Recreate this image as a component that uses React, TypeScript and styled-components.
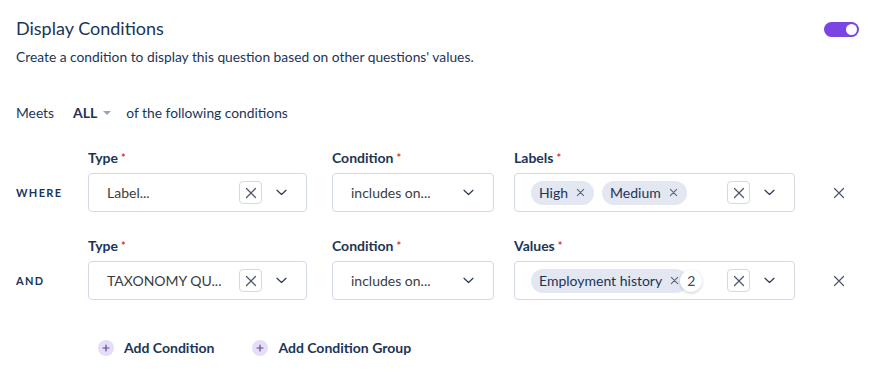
import styled, { createGlobalStyle } from "styled-components";

const GlobalStyle = createGlobalStyle`
  body {
    margin: 0;
    background: #ffffff;
    font-family: Lato, "Open Sans", sans-serif;
  }
`;

const Page = styled.div`
  padding: 16px 16px 0 16px;
  color: #1c3557;
`;

const HeaderRow = styled.div`
  display: flex;
  justify-content: space-between;
  align-items: flex-start;
`;

const Title = styled.h2`
  margin: 0;
  font-size: 18px;
  line-height: 24px;
  font-weight: 400;
  color: #1c3557;
`;

const Toggle = styled.div`
  width: 35px;
  height: 15px;
  border-radius: 8px;
  background: #7b45e3;
  margin: 6px 8px 0 0;
  display: flex;
  align-items: center;
  justify-content: flex-end;
  padding: 0 2px;
  box-sizing: border-box;
`;

const Knob = styled.span`
  width: 11px;
  height: 11px;
  border-radius: 50%;
  background: #ffffff;
`;

const Subtitle = styled.p`
  margin: 8px 0 0 0;
  font-size: 13.8px;
  line-height: 18px;
  color: #1c3557;
`;

const MeetsRow = styled.div`
  display: flex;
  align-items: center;
  margin-top: 38px;
  font-size: 13.8px;
  line-height: 18px;
`;

const AllSelect = styled.span`
  display: flex;
  align-items: center;
  margin: 0 15px 0 19px;
  font-weight: 700;
  font-size: 14px;
`;

const Caret = styled.span`
  width: 0;
  height: 0;
  margin-left: 6px;
  border-left: 4px solid transparent;
  border-right: 4px solid transparent;
  border-top: 4px solid #9aa3b2;
`;

const Rows = styled.div`
  margin-top: 27px;
  display: flex;
  flex-direction: column;
  gap: 25px;
`;

const Row = styled.div`
  display: flex;
  align-items: flex-end;
`;

const Joiner = styled.div`
  width: 72px;
  flex-shrink: 0;
  height: 39px;
  display: flex;
  align-items: center;
  font-size: 11px;
  font-weight: 700;
  letter-spacing: 1.3px;
  color: #1c3557;
`;

const Field = styled.div<{ $width: number; $gap?: number }>`
  width: ${(p) => p.$width}px;
  flex-shrink: 0;
  margin-left: ${(p) => p.$gap ?? 0}px;
  display: flex;
  flex-direction: column;
  gap: 7px;
`;

const Label = styled.div`
  font-size: 14px;
  line-height: 17px;
  font-weight: 700;
  color: #1c3557;
`;

const Star = styled.span`
  color: #e0323c;
  font-size: 11px;
  margin-left: 3px;
  vertical-align: top;
`;

const Box = styled.div`
  height: 39px;
  box-sizing: border-box;
  border: 1px solid #d3dae6;
  border-radius: 4px;
  display: flex;
  align-items: center;
  padding: 0 19px 0 18px;
  font-size: 14px;
  color: #3a3d42;
`;

const ChipBox = styled(Box)`
  padding-left: 16px;
`;

const Value = styled.span`
  flex: 1;
  white-space: nowrap;
`;

const Chips = styled.div`
  flex: 1;
  display: flex;
  align-items: center;
  gap: 8px;
`;

const Chip = styled.span`
  height: 24px;
  border-radius: 12px;
  background: #e3e7f1;
  display: flex;
  align-items: center;
  gap: 8px;
  padding: 0 9px 0 8px;
  font-size: 14px;
  color: #1c3557;
  white-space: nowrap;
`;

const CountBadge = styled.span`
  width: 22px;
  height: 22px;
  border-radius: 50%;
  background: #ffffff;
  box-shadow: 0 1px 3px rgba(30, 50, 80, 0.25);
  display: flex;
  align-items: center;
  justify-content: center;
  font-size: 14px;
  color: #3d4a5c;
  margin-left: -16px;
`;

const ClearButton = styled.span`
  width: 23px;
  height: 23px;
  box-sizing: border-box;
  border: 1px solid #d3dae6;
  border-radius: 4px;
  display: flex;
  align-items: center;
  justify-content: center;
  margin-right: 14px;
`;

const RemoveCell = styled.div`
  height: 39px;
  flex-shrink: 0;
  margin-left: 38px;
  display: flex;
  align-items: center;
`;

const Actions = styled.div`
  display: flex;
  gap: 38px;
  margin: 39px 0 0 82px;
`;

const ActionButton = styled.div`
  display: flex;
  align-items: center;
  gap: 10px;
  font-size: 14px;
  font-weight: 700;
  color: #1c3557;
`;

const PlusCircle = styled.span`
  width: 16px;
  height: 16px;
  border-radius: 50%;
  background: #e7ddfa;
  display: flex;
  align-items: center;
  justify-content: center;
`;

function Cross({ size = 12, color = "#4a5568" }: { size?: number; color?: string }) {
  return (
    <svg width={size} height={size} viewBox="0 0 12 12" fill="none">
      <path d="M1.5 1.5L10.5 10.5M10.5 1.5L1.5 10.5" stroke={color} strokeWidth="1.2" strokeLinecap="round" />
    </svg>
  );
}

function SmallCross() {
  return (
    <svg width="9" height="9" viewBox="0 0 10 10" fill="none">
      <path d="M1.5 1.5L8.5 8.5M8.5 1.5L1.5 8.5" stroke="#5a667a" strokeWidth="1.2" strokeLinecap="round" />
    </svg>
  );
}

function Chevron() {
  return (
    <svg width="11" height="7" viewBox="0 0 11 7" fill="none">
      <path d="M1 1.2L5.5 5.5L10 1.2" stroke="#2d3d55" strokeWidth="1.2" strokeLinecap="round" strokeLinejoin="round" />
    </svg>
  );
}

function Plus() {
  return (
    <svg width="8" height="8" viewBox="0 0 8 8" fill="none">
      <path d="M4 1V7M1 4H7" stroke="#5b4b8a" strokeWidth="1.2" strokeLinecap="round" />
    </svg>
  );
}

function Controls() {
  return (
    <>
      <ClearButton>
        <Cross />
      </ClearButton>
      <Chevron />
    </>
  );
}

function Required({ children }: { children: string }) {
  return (
    <Label>
      {children}
      <Star>*</Star>
    </Label>
  );
}

export default function App() {
  return (
    <>
      <GlobalStyle />
      <Page>
        <HeaderRow>
          <Title>Display Conditions</Title>
          <Toggle>
            <Knob />
          </Toggle>
        </HeaderRow>
        <Subtitle>Create a condition to display this question based on other questions' values.</Subtitle>

        <MeetsRow>
          Meets
          <AllSelect>
            ALL
            <Caret />
          </AllSelect>
          of the following conditions
        </MeetsRow>

        <Rows>
          <Row>
            <Joiner>WHERE</Joiner>
            <Field $width={219}>
              <Required>Type</Required>
              <Box>
                <Value>Label...</Value>
                <Controls />
              </Box>
            </Field>
            <Field $width={162} $gap={25}>
              <Required>Condition</Required>
              <Box>
                <Value>includes on...</Value>
                <Chevron />
              </Box>
            </Field>
            <Field $width={281} $gap={20}>
              <Required>Labels</Required>
              <ChipBox>
                <Chips>
                  <Chip>
                    High <SmallCross />
                  </Chip>
                  <Chip>
                    Medium <SmallCross />
                  </Chip>
                </Chips>
                <Controls />
              </ChipBox>
            </Field>
            <RemoveCell>
              <Cross />
            </RemoveCell>
          </Row>

          <Row>
            <Joiner>AND</Joiner>
            <Field $width={219}>
              <Required>Type</Required>
              <Box>
                <Value>TAXONOMY QU...</Value>
                <Controls />
              </Box>
            </Field>
            <Field $width={162} $gap={25}>
              <Required>Condition</Required>
              <Box>
                <Value>includes on...</Value>
                <Chevron />
              </Box>
            </Field>
            <Field $width={281} $gap={20}>
              <Required>Values</Required>
              <ChipBox>
                <Chips>
                  <Chip>
                    Employment history <SmallCross />
                  </Chip>
                  <CountBadge>2</CountBadge>
                </Chips>
                <Controls />
              </ChipBox>
            </Field>
            <RemoveCell>
              <Cross />
            </RemoveCell>
          </Row>
        </Rows>

        <Actions>
          <ActionButton>
            <PlusCircle>
              <Plus />
            </PlusCircle>
            Add Condition
          </ActionButton>
          <ActionButton>
            <PlusCircle>
              <Plus />
            </PlusCircle>
            Add Condition Group
          </ActionButton>
        </Actions>
      </Page>
    </>
  );
}
